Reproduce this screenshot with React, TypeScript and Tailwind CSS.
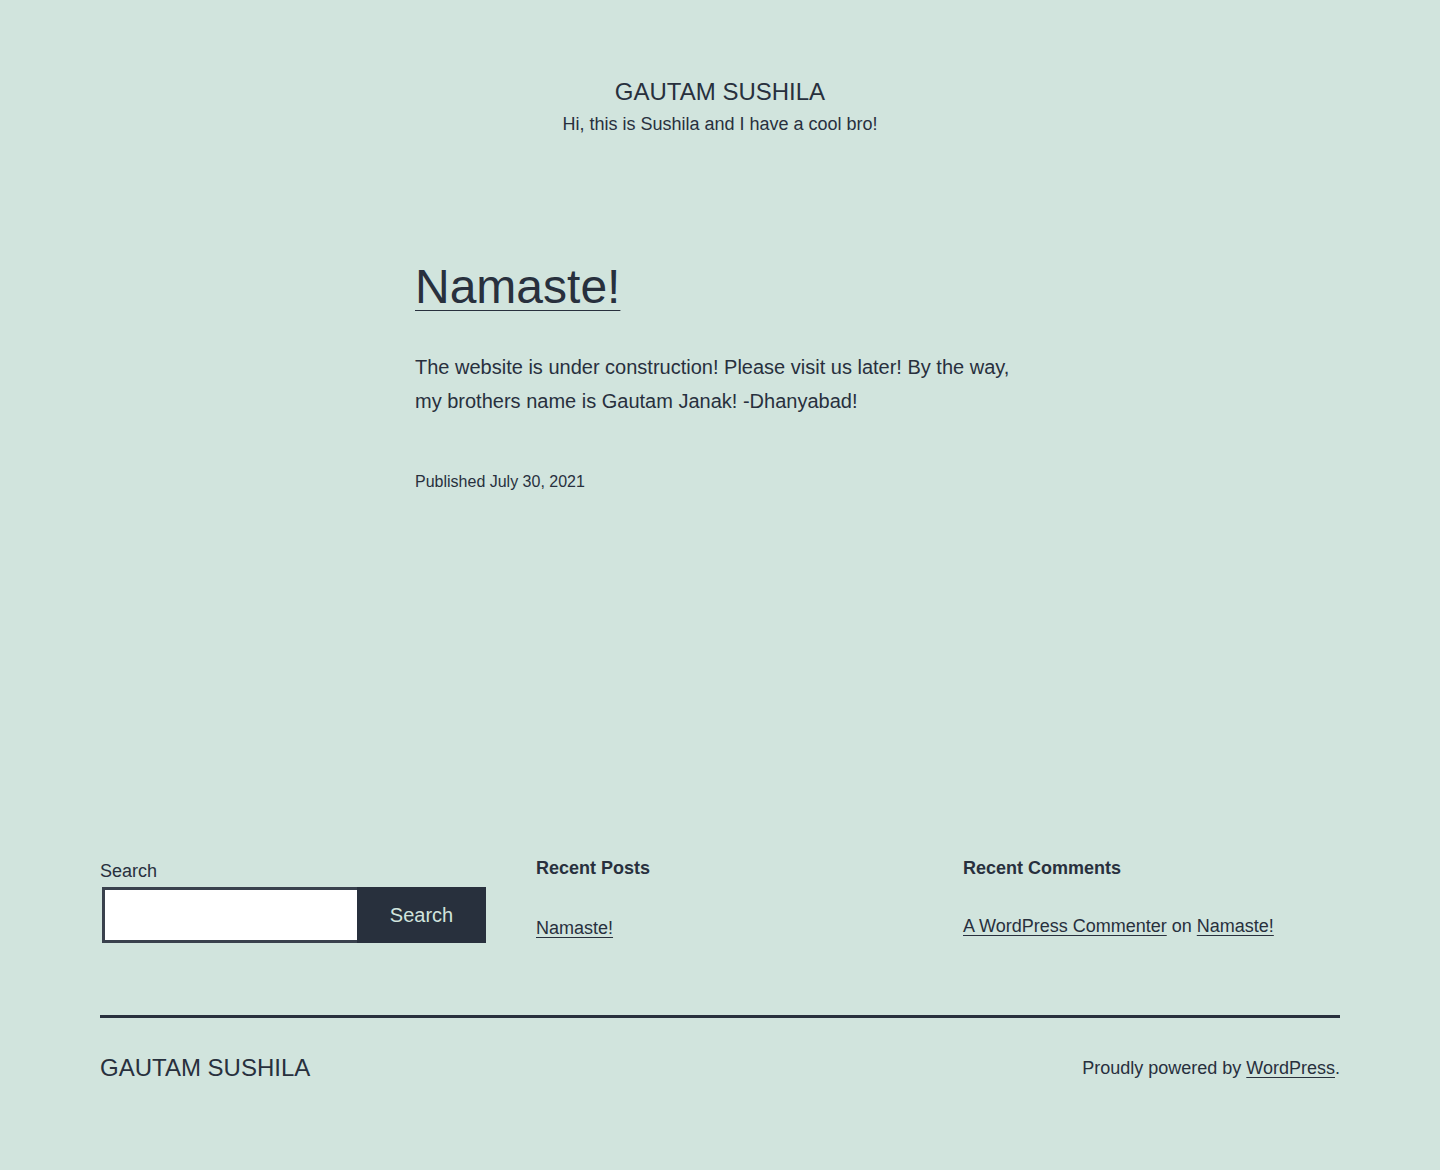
export default function App() {
  const font = { fontFamily: '"Liberation Sans", Arial, sans-serif' };
  return (
    <div className="min-h-screen bg-[#d1e4dd] text-[#28303d]" style={font}>
      <header className="flex flex-col items-center pt-[76px]">
        <p className="text-[24px] leading-[31px] uppercase">Gautam Sushila</p>
        <p className="mt-[5px] text-[18px] leading-[25px]">Hi, this is Sushila and I have a cool bro!</p>
      </header>

      <main className="mx-auto w-[610px] pt-[119px]">
        <h1 className="text-[48px] leading-[62px]">
          <a href="#" className="underline decoration-1 underline-offset-[7px]">Namaste!</a>
        </h1>
        <p className="mt-[32px] text-[20px] leading-[34px]">
          The website is under construction! Please visit us later! By the way, my brothers name is Gautam Janak! -Dhanyabad!
        </p>
        <p className="mt-[52px] text-[16px] leading-[24px]">Published July 30, 2021</p>
      </main>

      <section className="mx-auto mt-[361px] grid w-[1240px] grid-cols-[386px_377px_1fr] gap-x-[50px]">
        <div>
          <label className="mt-[1px] block text-[18px] leading-[30px]">Search</label>
          <div className="mt-[1px] ml-[2px] flex h-[56px]">
            <input className="h-full w-[255px] border-[3px] border-r-0 border-[#39414d] bg-white outline-none" />
            <button className="h-full w-[129px] bg-[#28303d] text-[20px] text-[#d1e4dd]">Search</button>
          </div>
        </div>
        <div>
          <h2 className="pt-[2px] text-[18px] font-bold leading-[23px]">Recent Posts</h2>
          <p className="mt-[33px] text-[18px] leading-[30px]">
            <a href="#" className="underline decoration-1 underline-offset-[3px]">Namaste!</a>
          </p>
        </div>
        <div>
          <h2 className="pt-[2px] text-[18px] font-bold leading-[23px]">Recent Comments</h2>
          <p className="mt-[31px] text-[18px] leading-[30px]">
            <a href="#" className="underline decoration-1 underline-offset-[3px]">A WordPress Commenter</a> on{" "}
            <a href="#" className="underline decoration-1 underline-offset-[3px]">Namaste!</a>
          </p>
        </div>
      </section>

      <footer className="mx-auto mt-[72px] w-[1240px] border-t-[3px] border-[#28303d] pb-[86px] pt-[34px]">
        <div className="flex items-center justify-between">
          <p className="text-[24px] leading-[31px] uppercase">Gautam Sushila</p>
          <p className="pt-[2px] text-[18px] leading-[25px]">
            Proudly powered by <a href="#" className="underline decoration-1 underline-offset-[3px]">WordPress</a>.
          </p>
        </div>
      </footer>
    </div>
  );
}
